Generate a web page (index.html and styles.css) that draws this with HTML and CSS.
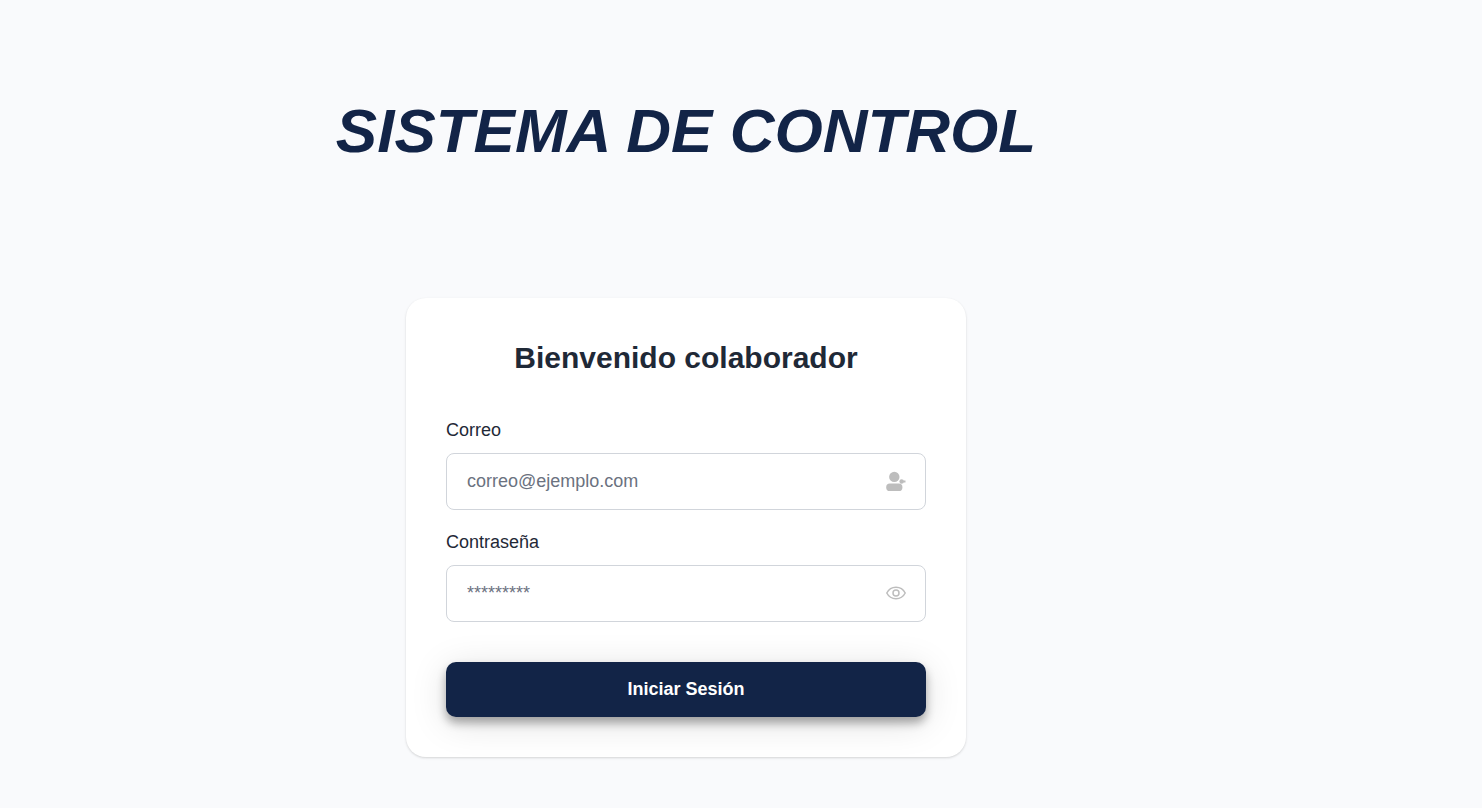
FILE: index.html
```html
<!DOCTYPE html>
<html lang="es">
<head>
<meta charset="utf-8">
<meta name="viewport" content="width=device-width, initial-scale=1">
<title>Sistema de control</title>
<link rel="stylesheet" href="styles.css">
</head>
<body>
<main class="page">
  <h1 class="page-title">SISTEMA DE CONTROL</h1>
  <form class="card">
    <h2 class="card-title">Bienvenido colaborador</h2>
    <div class="field">
      <label class="label" for="email">Correo</label>
      <div class="input-box">
        <input class="input" id="email" type="email" placeholder="correo@ejemplo.com">
        <svg class="icon" viewBox="0 0 20 20" fill="currentColor" aria-hidden="true">
          <circle cx="8.3" cy="4.9" r="5.2"/>
          <rect x="0.2" y="11.4" width="16.200" height="7.600" rx="3.600"/>
          <circle cx="15.600" cy="9.500" r="2.200"/>
          <path d="M15.600 8.500h3.900v2h-3.900z"/>
        </svg>
      </div>
    </div>
    <div class="field">
      <label class="label" for="password">Contraseña</label>
      <div class="input-box">
        <input class="input" id="password" type="password" placeholder="*********">
        <button class="reveal" type="button" aria-label="Mostrar contraseña">
          <svg class="icon" viewBox="0 0 20 20" fill="none" stroke="currentColor" stroke-width="1.5" aria-hidden="true">
            <path d="M.8 9C2.700 5.300 6 3.300 10 3.300S17.300 5.300 19.200 9c-1.900 3.700-5.200 5.700-9.200 5.700S2.700 12.700.8 9z"/>
            <circle cx="10" cy="9" r="3"/>
          </svg>
        </button>
      </div>
    </div>
    <button class="submit" type="submit">Iniciar Sesión</button>
  </form>
</main>
</body>
</html>
```
FILE: styles.css
```css
* {
  box-sizing: border-box;
}

body {
  margin: 0;
  background: #f9fafc;
  color: #1f2937;
  font-family: Arial, "Liberation Sans", sans-serif;
}

.page {
  display: flex;
  flex-direction: column;
  align-items: center;
  gap: 132px;
  min-height: 100vh;
  padding: 96px 110px 48px 0;
}

.page-title {
  margin: 0;
  color: #122447;
  font-size: 62px;
  font-style: italic;
  font-weight: 700;
  line-height: 70px;
}

.card {
  display: flex;
  flex-direction: column;
  gap: 20px;
  width: 100%;
  max-width: 560px;
  padding: 40px;
  border-radius: 20px;
  background: #fff;
  box-shadow: 0 1px 3px rgba(0, 0, 0, 0.1), 0 1px 2px rgba(0, 0, 0, 0.06);
}

.card-title {
  margin: 0 0 20px;
  font-size: 30px;
  font-weight: 700;
  line-height: 40px;
  text-align: center;
}

.field {
  display: flex;
  flex-direction: column;
  gap: 10px;
}

.label {
  font-size: 18px;
  line-height: 25px;
}

.input-box {
  display: flex;
  align-items: center;
  padding: 0 19px 0 20px;
  border: 1px solid #d1d5db;
  border-radius: 8px;
  color: #bdbdbd;
}

.input {
  flex: 1;
  min-width: 0;
  height: 55px;
  padding: 0;
  border: 0;
  outline: 0;
  background: transparent;
  color: #1f2937;
  font-family: inherit;
  font-size: 18px;
}

.input::placeholder {
  color: #6b7280;
}

.icon {
  display: block;
  width: 20px;
  height: 20px;
  overflow: visible;
}

.reveal {
  padding: 0;
  border: 0;
  background: none;
  color: inherit;
  cursor: pointer;
}

.submit {
  height: 55px;
  margin-top: 20px;
  border: 0;
  border-radius: 10px;
  background: #122447;
  box-shadow: 0 6px 10px rgba(0, 0, 0, 0.32), 0 6px 36px rgba(0, 0, 0, 0.13);
  color: #fff;
  font-family: inherit;
  font-size: 18px;
  font-weight: 700;
  cursor: pointer;
}
```
